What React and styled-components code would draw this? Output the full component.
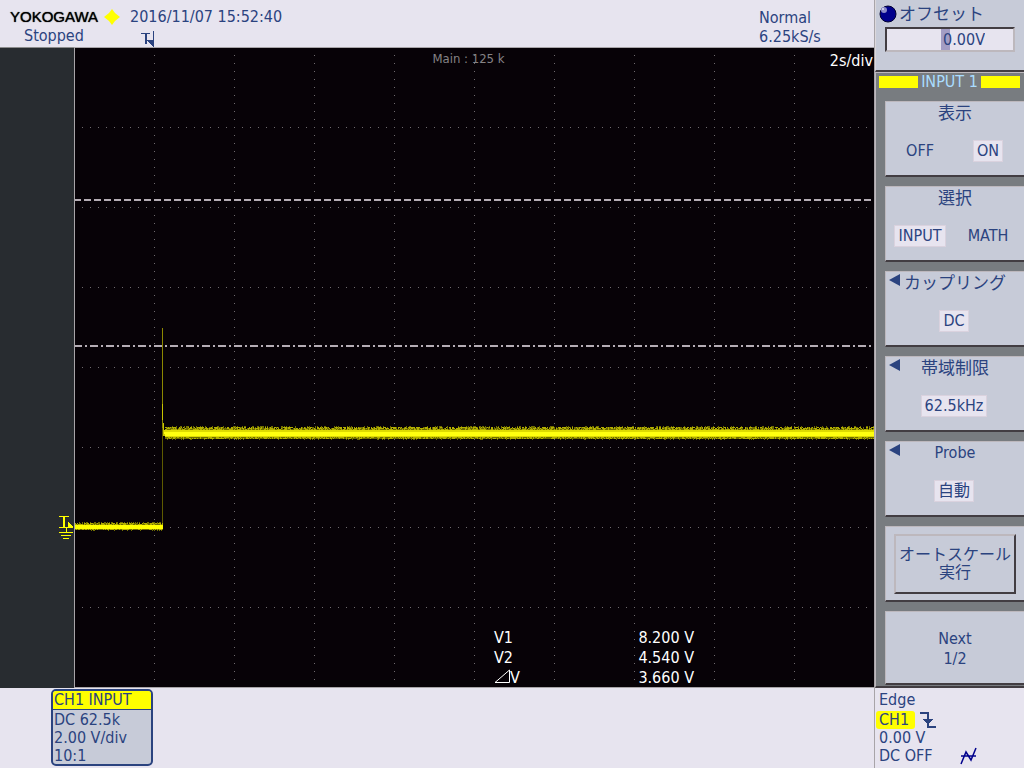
import React from "react";
import styled, { createGlobalStyle } from "styled-components";

const GlobalStyle = createGlobalStyle`
  *, *::before, *::after { box-sizing: border-box; }
  html, body { margin: 0; }
  body {
    background: #e7e4ef;
    color: #2b437f;
    font: 16px/18px "DejaVu Sans Condensed", "Noto Sans", "Noto Sans CJK JP", sans-serif;
  }
  button, input { font: inherit; color: inherit; }
`;

const Screen = styled.div`
  display: grid;
  grid-template-columns: minmax(0, 1fr) 150px;
  min-height: 100vh;
`;

const Main = styled.main`
  display: flex;
  flex-direction: column;
`;

const Header = styled.header`
  display: flex;
  justify-content: space-between;
  height: 47px;
  padding: 8px 51px 0 10px;
`;

const Brand = styled.div`
  display: flex;
  width: 120px;
  flex-wrap: wrap;
  column-gap: 6px;
  align-items: center;
  align-content: flex-start;
`;

const Logo = styled.strong`
  width: 88px;
  color: #000;
  font: 400 15px/18px "Liberation Sans", Arial, sans-serif;
  text-shadow: 0 0 1px #000;
  white-space: nowrap;
`;

const Status = styled.div`
  padding: 1px 0 0 14px;
`;

const Clock = styled.div`
  display: flex;
  flex: 1;
  flex-direction: column;
  svg { margin: 5px 0 0 11px; }
`;

const Acquisition = styled.div`
  width: 64px;
  line-height: 19px;
  white-space: nowrap;
`;

const Scope = styled.section`
  display: grid;
  grid-template-columns: 74px minmax(0, 1fr);
  height: 641px;
`;

const Gutter = styled.div`
  display: flex;
  justify-content: flex-end;
  align-items: flex-start;
  padding-top: 468px;
  background: #282c30;
  border-top: 1px solid #8c8c8c;
  svg { display: block; }
`;

const Plot = styled.div`
  position: relative;
  overflow: hidden;
  background: #070207;
  border: 1px solid #a8a4a8;
  border-right: 0;
`;

const Trace = styled.svg`
  display: block;
  width: 100%;
  height: 639px;
`;

const RecordLength = styled.div`
  position: absolute;
  top: 2px;
  left: 0;
  right: 12px;
  text-align: center;
  color: #858285;
  font: 13px/18px "DejaVu Sans Condensed", "Noto Sans", sans-serif;
`;

const TimeScale = styled.div`
  position: absolute;
  top: 4px;
  right: 1px;
  color: #fff;
`;

const Readout = styled.table`
  position: absolute;
  left: 419px;
  top: 580px;
  width: 200px;
  border-collapse: collapse;
  color: #fff;
  line-height: 20px;
  th, td { padding: 0; font-weight: 400; }
  th { text-align: left; }
  td { text-align: right; }
`;

const Footer = styled.footer`
  flex: 1;
  padding: 1px 0 0 51px;
`;

const ChannelCard = styled.section`
  width: 102px;
  height: 77px;
  overflow: hidden;
  border: 2px solid #2b437f;
  border-radius: 5px;
  background: #c7cbd8;
  white-space: nowrap;
`;

const ChannelTitle = styled.h2`
  margin: 0 0 1px;
  padding-left: 1px;
  border-bottom: 1px solid #2b437f;
  background: #ffff00;
  font: inherit;
`;

const ChannelLine = styled.div`
  padding-left: 1px;
`;

const Side = styled.aside`
  display: flex;
  flex-direction: column;
  border-left: 1px solid #a8a4a8;
`;

const OffsetPanel = styled.section`
  height: 72px;
  padding: 4px 9px 0 3px;
  border-left: 1px solid #dcd8dc;
  border-bottom: 2px solid #423d42;
  background: #c7cbd8;
`;

const OffsetLabel = styled.label`
  display: flex;
  gap: 2px;
  align-items: center;
  height: 20px;
  font-size: 17px;
`;

const OffsetInput = styled.input`
  display: block;
  width: 130px;
  height: 25px;
  margin: 3px 0 0 6px;
  padding: 0 28px 0 0;
  border: 2px solid;
  border-color: #423d42 #bdb8bd #bdb8bd #423d42;
  border-radius: 0;
  outline: 0;
  background: linear-gradient(#a39dc4, #a39dc4) 54px 0 / 9px 100% no-repeat #e7e4ef;
  text-align: right;
`;

const Menu = styled.nav`
  display: flex;
  flex-direction: column;
  gap: 9px;
  height: 616px;
  border: 1px solid #bdb8bd;
  border-right: 0;
  border-bottom: 2px solid #423d42;
  background: #787c80;
`;

const MenuTitle = styled.h2`
  display: flex;
  gap: 3px;
  align-items: center;
  margin: 0 0 1px;
  padding: 0 4px 0 3px;
  height: 18px;
  color: #aadcff;
  font: inherit;
  white-space: nowrap;
  &::before, &::after {
    content: "";
    flex: 1;
    height: 12px;
    background: #ffff00;
  }
`;

const SoftKey = styled.div`
  position: relative;
  display: flex;
  flex-direction: column;
  align-items: center;
  justify-content: ${(p) => (p.$center ? "center" : "flex-start")};
  flex: none;
  height: ${(p) => (p.$last ? 74 : 76)}px;
  margin-left: 9px;
  padding-top: ${(p) => (p.$center ? 0 : 2)}px;
  border: 1px solid #bdb8bd;
  border-right: 0;
  border-bottom: 2px solid #423d42;
  background: #c7cbd8;
`;

const KeyTitle = styled.div`
  height: 18px;
  font-size: ${(p) => (p.$latin ? 16 : 17)}px;
  white-space: nowrap;
`;

const Marker = styled.svg`
  position: absolute;
  top: 1px;
  left: 3px;
`;

const Options = styled.div`
  display: grid;
  grid-template-columns: ${(p) => (p.$pair ? "1fr 1fr" : "1fr")};
  justify-items: center;
  width: 100%;
  padding: 18px 2px 0 0;
`;

const Option = styled.button`
  height: 22px;
  padding: 0 3px;
  border: 1px solid ${(p) => (p.$on ? "#dad2de" : "transparent")};
  background: ${(p) => (p.$on ? "#e7e4ef" : "transparent")};
  line-height: 20px;
`;

const ActionButton = styled.button`
  width: 122px;
  height: 60px;
  padding: 0;
  border: 2px solid;
  border-color: #bdb8bd #423d42 #423d42 #bdb8bd;
  background: transparent;
  line-height: 18px;
  white-space: nowrap;
`;

const NextButton = styled.button`
  width: 100%;
  height: 100%;
  padding: 2px 0 0;
  border: 0;
  background: transparent;
  line-height: 20px;
`;

const Trigger = styled.section`
  display: flex;
  flex-direction: column;
  padding: 3px 0 0 1px;
  line-height: 18px;
`;

const TriggerRow = styled.div`
  display: flex;
  gap: ${(p) => p.$gap || 0}px;
  align-items: center;
  height: 18px;
  padding-left: ${(p) => (p.$flush ? 0 : 3)}px;
  &:first-child { margin-bottom: 2px; }
`;

const ChannelBadge = styled.span`
  width: 39px;
  height: 18px;
  padding-left: 3px;
  border-radius: 3px;
  background: #ffff00;
`;

function makeRandom(seed) {
  let s = seed;
  return () => {
    s = (s * 1103515245 + 12345) % 2147483648;
    return s / 2147483648;
  };
}

function bandPaths(x0, x1, top, bottom, spread, seed) {
  const rnd = makeRandom(seed);
  const dark = [];
  const mid = [];
  for (let x = x0; x < x1; x += 1) {
    const up = Math.floor(rnd() * spread);
    const down = rnd() > 0.85 ? 1 : 0;
    dark.push(`M${x} ${top + up}h1V${bottom + down}h-1z`);
    for (let y = top + 1; y < bottom; y += 1) {
      if (rnd() > 0.5) mid.push(`M${x} ${y}h1v1h-1z`);
    }
  }
  return { dark: dark.join(""), mid: mid.join("") };
}

const LOW = bandPaths(0, 88, 474, 482, 3, 7);
const HIGH = bandPaths(90, 800, 378, 391, 4, 21);

function gridDots() {
  let d = "";
  for (let x = 79; x < 800; x += 80) {
    for (let y = 7; y < 639; y += 8) d += `M${x} ${y}h1v1h-1z`;
  }
  for (let y = 79; y < 639; y += 80) {
    for (let x = 7; x < 800; x += 8) d += `M${x} ${y}h1v1h-1z`;
  }
  return d;
}
const GRID = gridDots();

function Waveform() {
  return (
    <Trace shapeRendering="crispEdges" aria-label="Waveform" role="img">
      <path d={GRID} fill="#6e6a6e" />
      <path d="M-1 152H800" stroke="#b5adb5" strokeWidth="2" strokeDasharray="7 3" />
      <path d="M-1 298H800" stroke="#b5adb5" strokeWidth="2" strokeDasharray="8 3 2 3" />
      <path d="M87 280h1v100h-1z" fill="#8c8800" />
      <path d="M87 380h1v98h-1z" fill="#5e5b00" />
      <path d="M87 356h1v19h1v9h1v4h-2z" fill="#c8c400" />
      <path d={LOW.dark} fill="#6f6d00" />
      <path d={LOW.mid} fill="#b3b000" />
      <path d="M0 477h88v4H0z" fill="#ffff00" />
      <path d={HIGH.dark} fill="#6f6d00" />
      <path d={HIGH.mid} fill="#b3b000" />
      <path d="M89 382H800v7H90z" fill="#dedb00" />
      <path d="M89 384H800v4H90z" fill="#ffff10" />
    </Trace>
  );
}

function TriangleMarker() {
  return (
    <Marker width="12" height="14" aria-hidden="true">
      <path d="M0 7L11 1v12z" fill="#2b437f" />
    </Marker>
  );
}

function Setting({ title, options, value, menu, latin }) {
  return (
    <SoftKey>
      {menu && <TriangleMarker />}
      <KeyTitle $latin={latin}>{title}</KeyTitle>
      <Options $pair={options.length > 1}>
        {options.map((o) => (
          <Option key={o} type="button" $on={o === value} aria-pressed={o === value}>
            {o}
          </Option>
        ))}
      </Options>
    </SoftKey>
  );
}

const SETTINGS = [
  { title: "表示", options: ["OFF", "ON"], value: "ON" },
  { title: "選択", options: ["INPUT", "MATH"], value: "INPUT" },
  { title: "カップリング", options: ["DC"], value: "DC", menu: true },
  { title: "帯域制限", options: ["62.5kHz"], value: "62.5kHz", menu: true },
  { title: "Probe", options: ["自動"], value: "自動", menu: true, latin: true },
];

export default function App() {
  return (
    <>
      <GlobalStyle />
      <Screen>
        <Main>
          <Header>
            <Brand>
              <Logo>YOKOGAWA</Logo>
              <svg width="16" height="16" aria-hidden="true">
                <path d="M8 0l3 4 5 4-5 4-3 4-3-4-5-4 5-4z" fill="#ffff00" />
              </svg>
              <Status>Stopped</Status>
            </Brand>
            <Clock>
              <time>2016/11/07 15:52:40</time>
              <svg width="14" height="16" aria-hidden="true" shapeRendering="crispEdges">
                <path d="M0 2h9v1H0zM4 2h2v11H4zM12 0h1v16h-1z" fill="#2b437f" />
                <path d="M5 9h8v7z" fill="#2b437f" />
              </svg>
            </Clock>
            <Acquisition>
              Normal
              <br />
              6.25kS/s
            </Acquisition>
          </Header>
          <Scope>
            <Gutter>
              <svg width="16" height="23" aria-hidden="true" shapeRendering="crispEdges">
                <path
                  d="M1 0h10v1H1zM5 0h2v11H5zM1 11h14v1H1zM8 12h1v4H8zM1 16h14v1H1zM3 19h10v1H3zM5 22h6v1H5zM10 6l5 5h-5z"
                  fill="#ffff00"
                />
              </svg>
            </Gutter>
            <Plot>
              <Waveform />
              <RecordLength>Main : 125 k</RecordLength>
              <TimeScale>2s/div</TimeScale>
              <Readout>
                <tbody>
                  <tr>
                    <th scope="row">V1</th>
                    <td>8.200 V</td>
                  </tr>
                  <tr>
                    <th scope="row">V2</th>
                    <td>4.540 V</td>
                  </tr>
                  <tr>
                    <th scope="row">
                      <svg width="16" height="14" role="img" aria-label="Delta">
                        <path d="M1 13.5H15.5V1z" fill="none" stroke="#fff" />
                      </svg>
                      V
                    </th>
                    <td>3.660 V</td>
                  </tr>
                </tbody>
              </Readout>
            </Plot>
          </Scope>
          <Footer>
            <ChannelCard>
              <ChannelTitle>CH1 INPUT</ChannelTitle>
              <ChannelLine>DC 62.5k</ChannelLine>
              <ChannelLine>2.00 V/div</ChannelLine>
              <ChannelLine>10:1</ChannelLine>
            </ChannelCard>
          </Footer>
        </Main>
        <Side>
          <OffsetPanel>
            <OffsetLabel htmlFor="offset">
              <svg width="18" height="18" aria-hidden="true">
                <circle cx="9" cy="9" r="8" fill="#00008c" stroke="#000030" />
                <circle cx="5" cy="5" r="3" fill="#8c8cc8" />
                <circle cx="4" cy="4" r="1" fill="#e0e0f4" />
              </svg>
              オフセット
            </OffsetLabel>
            <OffsetInput id="offset" defaultValue="0.00V" />
          </OffsetPanel>
          <Menu>
            <MenuTitle>INPUT 1</MenuTitle>
            {SETTINGS.map((s) => (
              <Setting key={s.title} {...s} />
            ))}
            <SoftKey $center>
              <ActionButton type="button">
                オートスケール
                <br />
                実行
              </ActionButton>
            </SoftKey>
            <SoftKey $center $last>
              <NextButton type="button">
                Next
                <br />
                1/2
              </NextButton>
            </SoftKey>
          </Menu>
          <Trigger>
            <TriggerRow>Edge</TriggerRow>
            <TriggerRow $flush $gap={5}>
              <ChannelBadge>CH1</ChannelBadge>
              <svg width="16" height="17" aria-hidden="true" shapeRendering="crispEdges">
                <path d="M0 0h9v14h7v2H7V2H0z" fill="#2b437f" />
                <path d="M3 7h10l-5 6z" fill="#2b437f" />
              </svg>
            </TriggerRow>
            <TriggerRow>0.00 V</TriggerRow>
            <TriggerRow $gap={27}>
              DC OFF
              <svg width="18" height="18" aria-hidden="true" shapeRendering="geometricPrecision">
                <path d="M1 17l5-12 5 8 5-12M1 9h15" fill="none" stroke="#00008c" strokeWidth="1.5" />
              </svg>
            </TriggerRow>
          </Trigger>
        </Side>
      </Screen>
    </>
  );
}
